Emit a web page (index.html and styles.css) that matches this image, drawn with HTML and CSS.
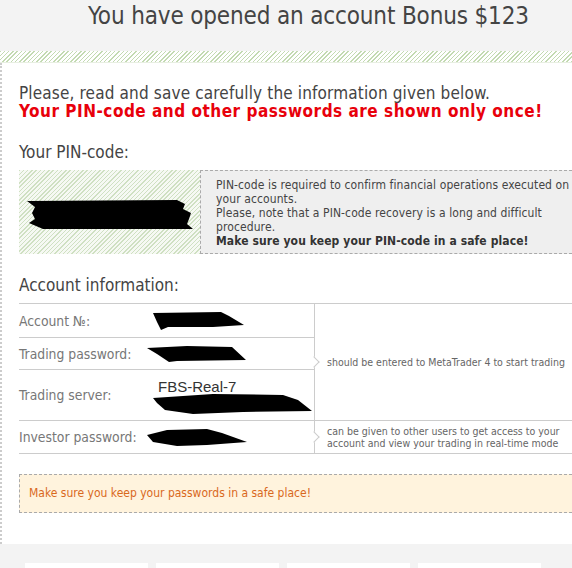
FILE: index.html
```html
<!DOCTYPE html>
<html lang="en">
<head>
    <meta charset="UTF-8">
    <title>Account opened</title>
    <link rel="stylesheet" href="styles.css">
</head>
<body>
    <div class="top">
        <h1>You have opened an account Bonus $123</h1>
    </div>
    <div class="stripe"></div>

    <div class="content">
        <p class="intro">Please, read and save carefully the information given below.</p>
        <p class="warn">Your PIN-code and other passwords are shown only once!</p>

        <h2>Your PIN-code:</h2>
        <div class="pin">
            <div class="pin-code">
                <svg width="166" height="31" viewBox="0 0 166 31"><polygon points="0,2 150,1 158,5 156,10 164,14 162,20 160,25 166,30 16,30 2,24 8,20 5,14 8,8" fill="#000"/></svg>
            </div>
            <div class="pin-note">
                PIN-code is required to confirm financial operations executed on your accounts.<br>
                Please, note that a PIN-code recovery is a long and difficult procedure.<br>
                <b>Make sure you keep your PIN-code in a safe place!</b>
            </div>
        </div>

        <h2>Account information:</h2>
        <table class="acc">
            <tr class="r1">
                <td class="lbl">Account №:</td>
                <td class="val"><svg class="b1" width="92" height="18" viewBox="0 0 92 18"><polygon points="0,1 68,0 76,4 91,13 60,15 15,15 8,18 4,10" fill="#000"/></svg></td>
                <td class="desc" rowspan="3">should be entered to MetaTrader 4 to start trading</td>
            </tr>
            <tr class="r2">
                <td class="lbl">Trading password:</td>
                <td class="val"><svg width="100" height="16" viewBox="0 0 100 16"><polygon points="0,2 40,0 85,1 99,14 30,15 22,16 10,8" fill="#000"/></svg></td>
            </tr>
            <tr class="r3">
                <td class="lbl">Trading server:</td>
                <td class="val">
                    <div class="server">FBS-Real-7</div>
                    <svg class="b3" width="160" height="20" viewBox="0 0 160 20"><polygon points="0,4 60,0 130,1 145,6 159,17 90,18 40,20 12,16 4,9" fill="#000"/></svg>
                </td>
            </tr>
            <tr class="r4">
                <td class="lbl">Investor password:</td>
                <td class="val"><svg width="102" height="17" viewBox="0 0 102 17"><polygon points="0,6 20,1 60,0 75,4 100,13 60,16 30,17 6,13" fill="#000"/></svg></td>
                <td class="desc">can be given to other users to get access to your account and view your trading in real-time mode</td>
            </tr>
        </table>

        <div class="notice">Make sure you keep your passwords in a safe place!</div>
    </div>

    <div class="foot">
        <div class="card"></div>
        <div class="card"></div>
        <div class="card"></div>
        <div class="card"></div>
    </div>
</body>
</html>
```

FILE: styles.css
```css
body { margin: 0; width: 572px; overflow: hidden; background: #fff; font-family: "DejaVu Sans Condensed", "DejaVu Sans", sans-serif; color: #444; }

.top { background: #f3f3f3; height: 51px; }
.top h1 { margin: 0; padding: 1px 0 0 88px; font-weight: normal; font-size: 24px; line-height: 30px; letter-spacing: -0.15px; color: #444; }

.stripe { height: 11px; background: repeating-linear-gradient(135deg, #c3dab2 0 1px, #fff 1px 3px); border-bottom: 1px solid #e8efe2; }

.content { border-left: 2px dotted #ccc; padding: 21px 0 31px 17px; }
.intro { margin: 0; font-size: 17px; line-height: 18px; letter-spacing: 0.15px; }
.warn { margin: 0 0 22px; font-size: 17px; line-height: 18px; font-weight: bold; letter-spacing: 0.5px; color: #e8000b; }
h2 { margin: 0 0 8px; font-weight: normal; font-size: 17px; line-height: 20px; }

.pin { display: flex; height: 84px; margin-bottom: 21px; }
.pin-code { width: 181px; display: flex; align-items: center; justify-content: center; padding-top: 4px; box-sizing: border-box; background: repeating-linear-gradient(135deg, #cfe0c2 0 1px, #f6f9f3 1px 3px); }
.pin-note { flex: 1; background: #efefef; border: 1px dashed #aaa; border-right: 0; padding: 7px 0 0 15px; font-size: 12px; line-height: 14px; letter-spacing: 0.1px; color: #444; }
.pin-note b { color: #333; }

.acc { width: 553px; border-collapse: collapse; margin-top: 7px; border-top: 1px solid #ccc; border-bottom: 1px solid #ccc; }
.acc td { padding: 0; font-size: 13.8px; color: #777; border-bottom: 1px solid #ccc; }
.acc .lbl { width: 128px; }
.acc .val { width: 167px; }
.acc .desc { position: relative; border-left: 1px solid #ccc; padding-left: 12px; font-size: 10.5px; line-height: 12px; color: #666; }
.acc .desc::before { content: ""; position: absolute; left: -5px; top: 50%; width: 7px; height: 7px; margin-top: -4px; background: #fff; border-top: 1px solid #ccc; border-right: 1px solid #ccc; transform: rotate(45deg); }
.r1 td { height: 33px; }
.r2 td { height: 31px; }
.r3 td { height: 50px; }
.r4 td { height: 32px; }
.val svg { display: block; }
.val .b1, .val .b3 { margin-left: 6px; }
.server { color: #333; font-family: "Liberation Sans", Arial, sans-serif; font-size: 15px; line-height: 15px; padding: 3px 0 0 11px; }

.notice { margin-top: 20px; height: 37px; line-height: 37px; background: #fff3dd; border: 1px dashed #aaa; border-right: 0; padding-left: 9px; font-size: 12px; color: #d9681c; }

.foot { display: flex; gap: 8px; background: #f3f3f3; height: 24px; padding: 19px 0 0 25px; overflow: hidden; }
.card { width: 123px; flex-shrink: 0; background: #fff; height: 20px; }
```
